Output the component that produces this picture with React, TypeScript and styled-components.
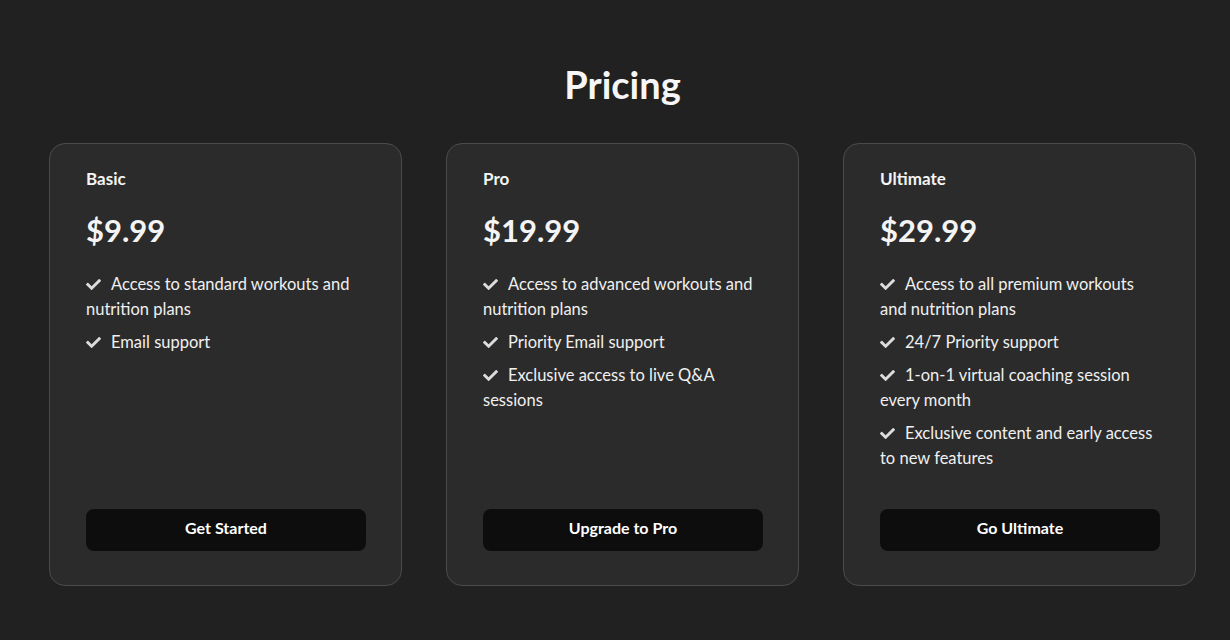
import styled, { createGlobalStyle } from "styled-components";
import { FaCheck } from "react-icons/fa";

const GlobalStyle = createGlobalStyle`
  body {
    margin: 0;
    background: #212121;
    font-family: Lato, "Noto Sans", sans-serif;
    color: #f4f4f4;
  }
`;

const Page = styled.section`
  width: 1230px;
  height: 640px;
  box-sizing: border-box;
  padding: 60px 0 0 15px;
  display: flex;
  flex-direction: column;
  align-items: center;
`;

const Title = styled.h1`
  margin: 0;
  font-size: 38px;
  line-height: 48px;
  font-weight: 700;
  color: #f6f6f6;
`;

const CardRow = styled.div`
  display: flex;
  gap: 44px;
  margin-top: 35px;
`;

const Card = styled.div`
  width: 353px;
  height: 443px;
  box-sizing: border-box;
  padding: 23px 36px 34px;
  background: #2b2b2b;
  border: 1px solid #4b4b4b;
  border-radius: 16px;
  display: flex;
  flex-direction: column;
`;

const PlanName = styled.h3`
  margin: 0;
  font-size: 17px;
  line-height: 24px;
  font-weight: 700;
`;

const Price = styled.div`
  margin-top: 19px;
  font-size: 31px;
  line-height: 40px;
  font-weight: 700;
`;

const Features = styled.ul`
  list-style: none;
  margin: 22px 0 0;
  padding: 0;
  display: flex;
  flex-direction: column;
  gap: 8px;
  flex: 1;
`;

const Feature = styled.li`
  font-size: 16.5px;
  line-height: 25px;
  color: #f0f0f0;
`;

const Tick = styled(FaCheck)`
  width: 15px;
  height: 15px;
  color: #dcdcdc;
  margin-right: 10px;
  vertical-align: -2px;
`;

const ActionButton = styled.button`
  width: 280px;
  height: 42px;
  padding: 0 0 5px;
  border: none;
  border-radius: 8px;
  background: #0d0d0d;
  color: #fff;
  font-family: inherit;
  font-size: 16px;
  font-weight: 700;
  cursor: pointer;
`;

const plans = [
  {
    name: "Basic",
    price: "$9.99",
    features: ["Access to standard workouts and nutrition plans", "Email support"],
    cta: "Get Started",
  },
  {
    name: "Pro",
    price: "$19.99",
    features: [
      "Access to advanced workouts and nutrition plans",
      "Priority Email support",
      "Exclusive access to live Q&A sessions",
    ],
    cta: "Upgrade to Pro",
  },
  {
    name: "Ultimate",
    price: "$29.99",
    features: [
      "Access to all premium workouts and nutrition plans",
      "24/7 Priority support",
      "1-on-1 virtual coaching session every month",
      "Exclusive content and early access to new features",
    ],
    cta: "Go Ultimate",
  },
];

export default function App() {
  return (
    <>
      <GlobalStyle />
      <Page>
        <Title>Pricing</Title>
        <CardRow>
          {plans.map((plan) => (
            <Card key={plan.name}>
              <PlanName>{plan.name}</PlanName>
              <Price>{plan.price}</Price>
              <Features>
                {plan.features.map((f) => (
                  <Feature key={f}>
                    <Tick />
                    {f}
                  </Feature>
                ))}
              </Features>
              <ActionButton>{plan.cta}</ActionButton>
            </Card>
          ))}
        </CardRow>
      </Page>
    </>
  );
}
